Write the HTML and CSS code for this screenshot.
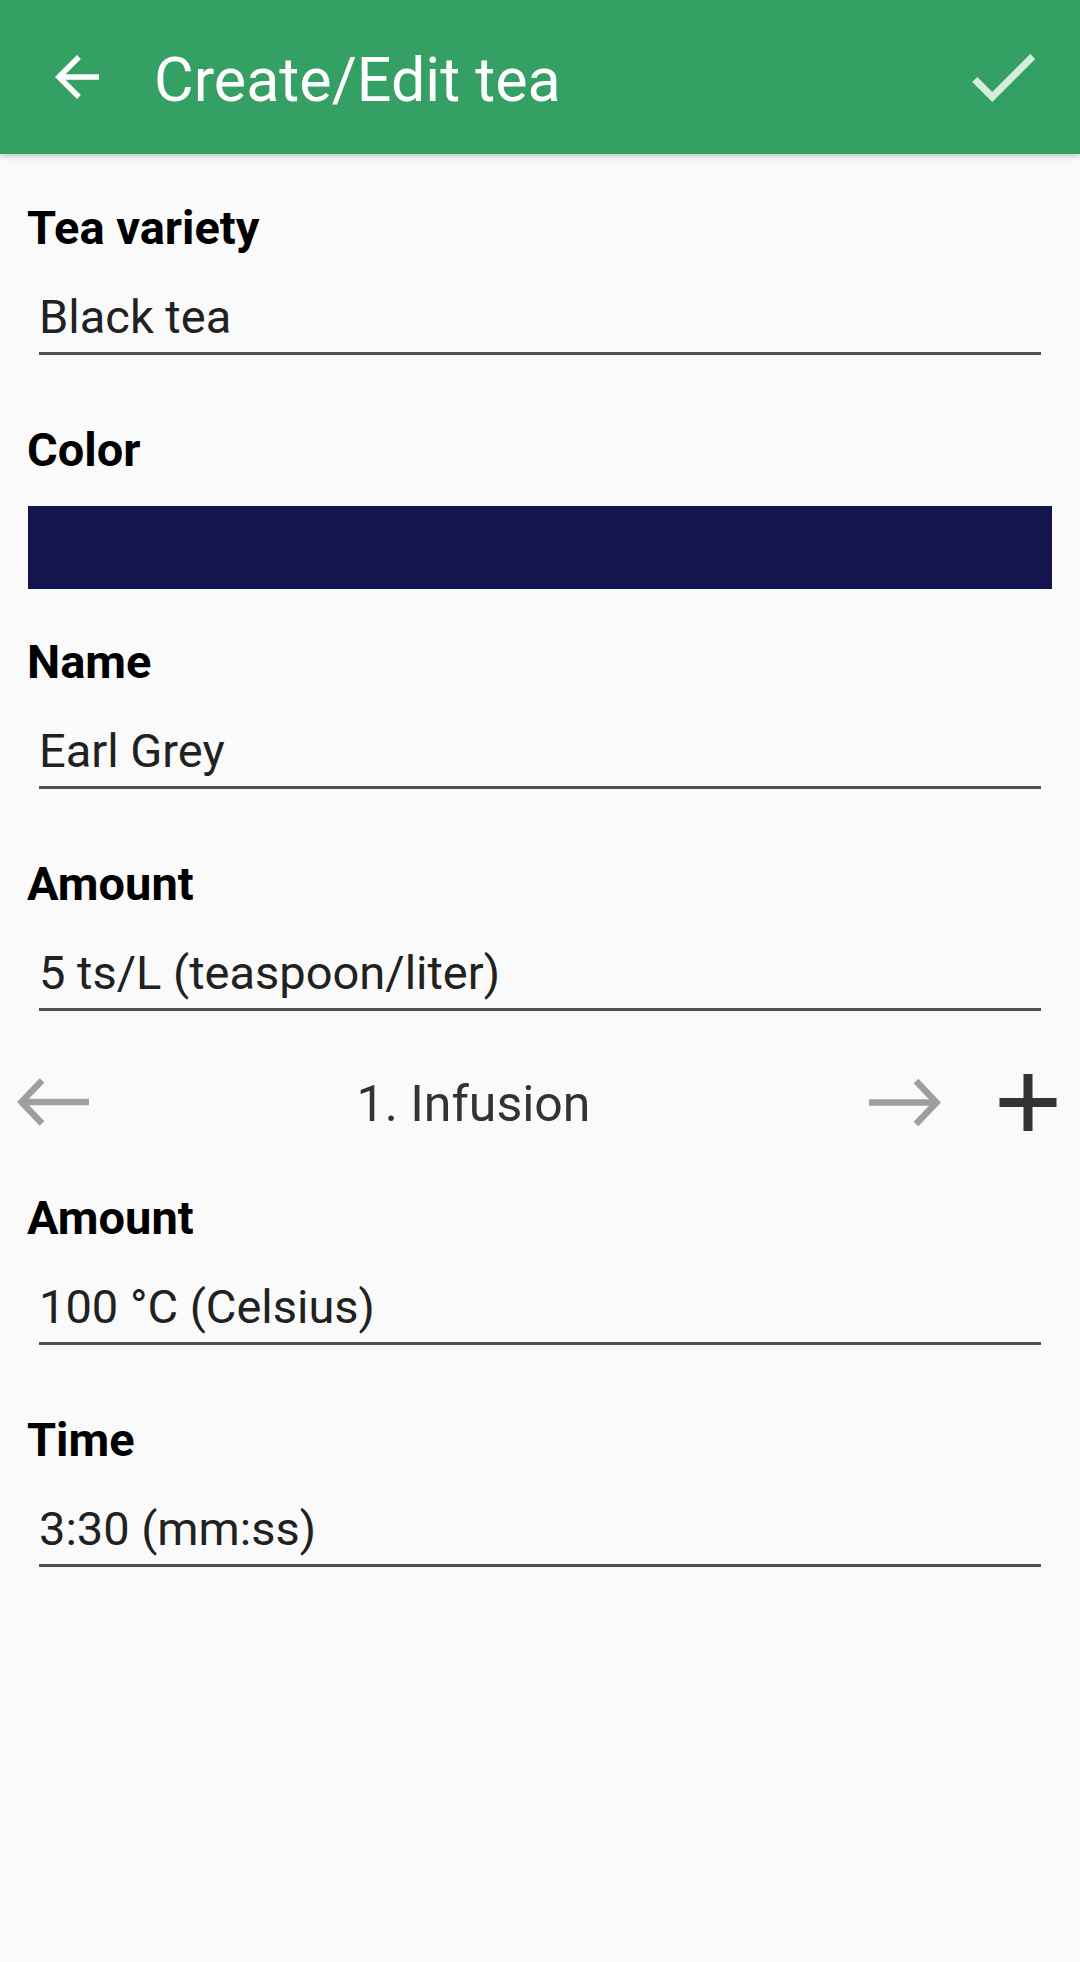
FILE: index.html
```html
<!DOCTYPE html>
<html lang="en">
<head>
<meta charset="utf-8">
<title>Create/Edit tea</title>
<link rel="stylesheet" href="styles.css">
</head>
<body>
<header class="appbar">
  <svg class="nav-icon" viewBox="0 0 24 24" aria-hidden="true"><path d="M20 11H7.83l5.59-5.59L12 4l-8 8 8 8 1.41-1.41L7.83 13H20v-2z"/></svg>
  <h1 class="title">Create/Edit tea</h1>
  <svg class="done-icon" viewBox="0 0 24 24" aria-hidden="true"><path d="M9 16.17L4.83 12l-1.42 1.41L9 19 21 7l-1.41-1.41z"/></svg>
</header>
<main class="form">
  <section class="field">
    <div class="label">Tea variety</div>
    <div class="input">Black tea</div>
  </section>
  <section class="field field-color">
    <div class="label">Color</div>
    <div class="swatch"></div>
  </section>
  <section class="field">
    <div class="label">Name</div>
    <div class="input">Earl Grey</div>
  </section>
  <section class="field">
    <div class="label">Amount</div>
    <div class="input">5 ts/L (teaspoon/liter)</div>
  </section>
  <div class="infusion-nav">
    <svg class="nav-prev" width="80" height="60" viewBox="0 0 80 60" aria-hidden="true">
      <polyline points="29,8.5 8.5,30 29,51.5" />
      <line x1="8.5" y1="30" x2="76" y2="30" />
    </svg>
    <div class="infusion-title">1. Infusion</div>
    <svg class="nav-next" width="80" height="60" viewBox="0 0 80 60" aria-hidden="true">
      <polyline points="51,9 71.5,30.5 51,52" />
      <line x1="4" y1="30.5" x2="71.5" y2="30.5" />
    </svg>
    <svg class="nav-add" width="70" height="60" viewBox="0 0 70 60" aria-hidden="true">
      <line x1="6.5" y1="30.5" x2="63.5" y2="30.5" />
      <line x1="35" y1="2" x2="35" y2="59" />
    </svg>
  </div>
  <section class="field field-after-nav">
    <div class="label">Amount</div>
    <div class="input">100 °C (Celsius)</div>
  </section>
  <section class="field">
    <div class="label">Time</div>
    <div class="input">3:30 (mm:ss)</div>
  </section>
</main>
</body>
</html>
```

FILE: styles.css
```css
html, body {
  margin: 0;
  padding: 0;
}

body {
  width: 1080px;
  min-height: 1962px;
  background: #fafafa;
  font-family: Roboto, "Noto Sans", "Liberation Sans", sans-serif;
}

.appbar {
  position: relative;
  z-index: 1;
  display: flex;
  align-items: center;
  height: 154px;
  background: #34a063;
  box-shadow: 0 2px 6px rgba(0, 0, 0, 0.22);
}

.nav-icon {
  width: 66px;
  height: 66px;
  margin-left: 44px;
  fill: #ffffff;
  flex: none;
}

.title {
  margin: 0 0 0 44px;
  padding-top: 6px;
  font-size: 61px;
  font-weight: 400;
  line-height: 74px;
  color: #ffffff;
  flex: 1;
  white-space: nowrap;
}

.done-icon {
  width: 86px;
  height: 86px;
  margin-right: 34px;
  fill: #d6eddf;
  flex: none;
}

.form {
  padding-top: 46px;
}

.field + .field {
  margin-top: 67px;
}

.field-color + .field {
  margin-top: 45px;
}

.label {
  padding-left: 27px;
  font-size: 47px;
  font-weight: 700;
  line-height: 56px;
  color: #000000;
}

.input {
  margin: 33px 39px 0 39px;
  padding-bottom: 7px;
  font-size: 47px;
  line-height: 56px;
  color: #212121;
  border-bottom: 3px solid #4f4f4f;
}

.swatch {
  margin: 28px 28px 0 28px;
  height: 83px;
  background: #14144f;
}

.infusion-nav {
  display: flex;
  align-items: center;
  height: 60px;
  margin-top: 61px;
}

.infusion-nav svg {
  flex: none;
  display: block;
}

.nav-prev,
.nav-next {
  fill: none;
  stroke: #9e9e9e;
  stroke-width: 6.5;
  stroke-linejoin: miter;
  stroke-linecap: butt;
}

.nav-prev {
  margin-left: 13px;
}

.infusion-title {
  flex: 1;
  padding-top: 4px;
  padding-right: 11px;
  text-align: center;
  font-size: 50px;
  line-height: 60px;
  color: #333333;
}

.nav-add {
  margin-left: 48px;
  margin-right: 17px;
  stroke: #333333;
  stroke-width: 9;
}

.field-after-nav {
  margin-top: 58px;
}
```
